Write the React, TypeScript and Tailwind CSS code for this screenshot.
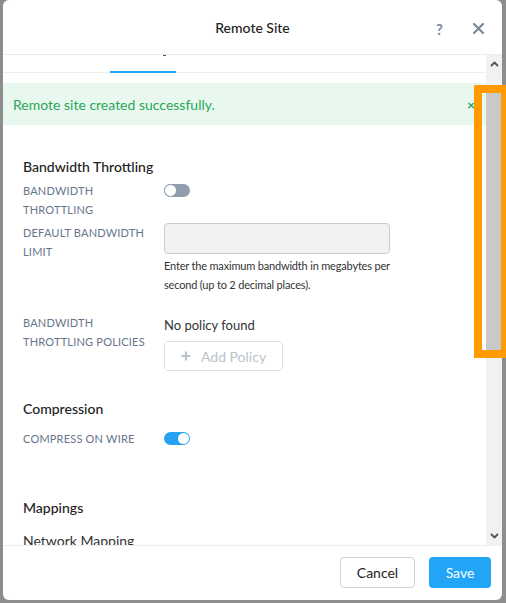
import React from "react";

function Toggle({ on }: { on: boolean }) {
  return on ? (
    <div className="w-[26px] h-[13px] rounded-full bg-[#27a1f1] flex items-center justify-end px-[1px]">
      <div className="w-[11px] h-[11px] rounded-full bg-white" />
    </div>
  ) : (
    <div className="w-[26px] h-[13px] rounded-full bg-[#919dad] flex items-center justify-start">
      <div className="w-[13px] h-[13px] rounded-full bg-white border border-[#919dad]" />
    </div>
  );
}

function Label({ children }: { children: React.ReactNode }) {
  return (
    <div className="w-[141px] shrink-0 text-[11px] leading-[19px] tracking-[0.2px] uppercase text-[#66768a]">
      {children}
    </div>
  );
}

export default function App() {
  return (
    <div
      className="relative w-[506px] h-[603px] overflow-hidden bg-[#8d8d8d] pl-[3px] pr-[4px] pb-[3px]"
      style={{ fontFamily: "Lato, 'Open Sans', sans-serif" }}
    >
      <div className="w-[499px] h-[600px] bg-white rounded-[6px] flex flex-col overflow-hidden">
        {/* header */}
        <div className="relative h-[55px] shrink-0 border-b border-[#ececec] flex items-center justify-center">
          <div className="text-[14px] text-[#222] font-medium">Remote Site</div>
          <div className="absolute right-[59px] top-[18px] text-[15px] font-bold text-[#7b8999]">?</div>
          <svg
            className="absolute right-[18px] top-[23px]"
            width="11"
            height="11"
            viewBox="0 0 11 11"
          >
            <path d="M1 1 L10 10 M10 1 L1 10" stroke="#7b8999" strokeWidth="2.2" strokeLinecap="round" />
          </svg>
        </div>

        {/* body */}
        <div className="h-[490px] shrink-0 flex">
          <div className="flex-1 overflow-hidden">
            <div className="relative h-[18px] border-b border-[#eeeeee] flex items-end">
              <div className="absolute left-[160px] top-0 w-[3px] h-[1px] bg-[#555]" />
              <div className="ml-[107px] w-[66px] h-[2px] -mb-px bg-[#22a5f7]" />
            </div>
            <div className="mt-[10px] h-[42px] bg-[#e8f8ee] flex items-center justify-between pl-[10px] pr-[11px]">
              <span className="text-[14px] text-[#2aa55b]">Remote site created successfully.</span>
              <span className="text-[14px] font-bold text-[#2aa55b]">×</span>
            </div>

            <div className="px-[20px]">
              <div className="mt-[32px] h-[20px] text-[14px] leading-[20px] text-[#222] font-medium">
                Bandwidth Throttling
              </div>

              <div className="mt-[4px] flex">
                <Label>
                  Bandwidth
                  <br />
                  Throttling
                </Label>
                <div className="pt-[3px]">
                  <Toggle on={false} />
                </div>
              </div>

              <div className="mt-[4px] flex">
                <Label>
                  Default Bandwidth
                  <br />
                  Limit
                </Label>
                <div>
                  <div className="w-[226px] h-[31px] bg-[#f2f2f2] border border-[#c8ccd0] rounded-[4px]" />
                  <div className="mt-[2px] text-[11px] leading-[19px] tracking-[-0.18px] text-[#333]">
                    Enter the maximum bandwidth in megabytes per
                    <br />
                    second (up to 2 decimal places).
                  </div>
                </div>
              </div>

              <div className="mt-[19px] flex">
                <Label>
                  Bandwidth
                  <br />
                  Throttling Policies
                </Label>
                <div>
                  <div className="h-[24px] text-[13px] leading-[24px] text-[#333]">No policy found</div>
                  <div className="mt-[4px] w-[119px] h-[30px] border border-[#dde1e5] rounded-[4px] flex items-center pl-[16px] gap-[10px] text-[#bac3cc]">
                    <svg width="10" height="10" viewBox="0 0 10 10">
                      <path d="M5 0.5 V9.5 M0.5 5 H9.5" stroke="#bac3cc" strokeWidth="2.2" />
                    </svg>
                    <span className="text-[14px]">Add Policy</span>
                  </div>
                </div>
              </div>

              <div className="mt-[28px] h-[20px] text-[14px] leading-[20px] text-[#222] font-medium">
                Compression
              </div>

              <div className="mt-[10px] flex">
                <Label>Compress on wire</Label>
                <div className="pt-[3px]">
                  <Toggle on={true} />
                </div>
              </div>

              <div className="mt-[50px] h-[20px] text-[14px] leading-[20px] text-[#222] font-medium">
                Mappings
              </div>
              <div className="mt-[13px] h-[20px] text-[14px] leading-[20px] text-[#333]">Network Mapping</div>
            </div>
          </div>

          {/* scrollbar */}
          <div className="w-[16px] shrink-0 bg-[#f1f1f1] flex flex-col items-start">
            <div className="h-[18px] w-[16px] flex items-center justify-center">
              <svg width="9" height="6" viewBox="0 0 9 6">
                <path d="M1 5 L4.5 1.5 L8 5" stroke="#505050" strokeWidth="1.8" fill="none" />
              </svg>
            </div>
            <div className="mt-[20px] w-[15px] h-[257px] bg-[#c9c9c9]" />
            <div className="flex-1" />
            <div className="h-[18px] w-[16px] flex items-center justify-center">
              <svg width="9" height="6" viewBox="0 0 9 6">
                <path d="M1 1 L4.5 4.5 L8 1" stroke="#505050" strokeWidth="1.8" fill="none" />
              </svg>
            </div>
          </div>
        </div>

        {/* footer */}
        <div className="flex-1 border-t border-[#eeeeee] flex items-start justify-end pt-[11px] pr-[11px] gap-[14px]">
          <button className="w-[75px] h-[31px] border border-[#cfd3d7] rounded-[4px] bg-white text-[14px] text-[#222]">
            Cancel
          </button>
          <button className="w-[62px] h-[31px] rounded-[4px] bg-[#22a5f7] text-[14px] text-white">Save</button>
        </div>
      </div>

      {/* annotation highlight */}
      <div className="absolute left-[474px] top-[85px] w-[35px] h-[273px] border-[8px] border-[#ff9a00]" />
    </div>
  );
}
